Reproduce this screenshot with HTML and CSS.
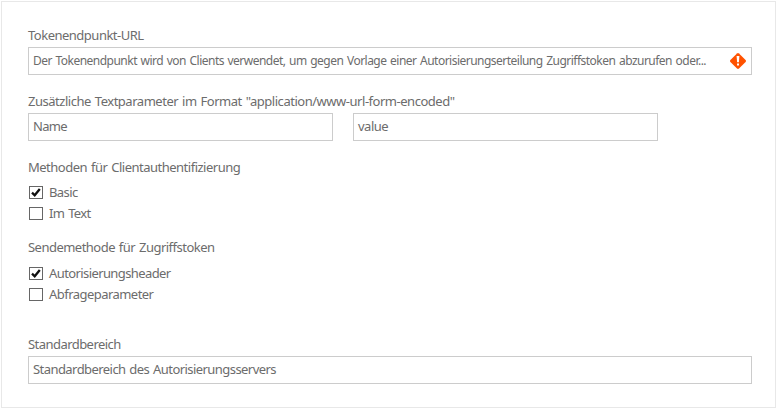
FILE: index.html
```html
<!DOCTYPE html>
<html lang="de">
<head>
<meta charset="utf-8">
<title>OAuth 2.0</title>
<link rel="stylesheet" href="styles.css">
</head>
<body>
<form class="panel">
  <div class="label"><span class="t-url">Tokenendpunkt-URL</span></div>
  <div class="field"><span class="t-hint">Der Tokenendpunkt wird von Clients verwendet, um gegen Vorlage einer Autorisierungserteilung Zugriffstoken abzurufen oder...</span>
    <svg class="alert" width="16" height="16" viewBox="0 0 16 16"><path fill="#ff5200" d="M7 .4Q8-.4 9 .4L15.6 7Q16.4 8 15.6 9L9 15.6Q8 16.4 7 15.6L.4 9Q-.4 8 .4 7Z"/><path fill="#fff" d="M6.6 3h2.8l-.5 6.3H7.1zM7 10.4h2v2H7z"/></svg>
  </div>
  <div class="label gap-params"><span class="t-params">Zusätzliche Textparameter im Format "application/www-url-form-encoded"</span></div>
  <div class="pair">
    <div class="field"><span class="t-name">Name</span></div>
    <div class="field"><span class="t-value">value</span></div>
  </div>
  <div class="label gap-methods"><span class="t-methods">Methoden für Clientauthentifizierung</span></div>
  <div class="options">
    <div class="option"><span class="box"><svg width="12" height="11" viewBox="0 0 12 11"><path d="M2 5.7L4.7 8.3L9.8 2"/></svg></span><span class="t-basic">Basic</span></div>
    <div class="option"><span class="box"></span><span class="t-text">Im Text</span></div>
  </div>
  <div class="label gap-send"><span class="t-send">Sendemethode für Zugriffstoken</span></div>
  <div class="options send">
    <div class="option"><span class="box"><svg width="12" height="11" viewBox="0 0 12 11"><path d="M2 5.7L4.7 8.3L9.8 2"/></svg></span><span class="t-header">Autorisierungsheader</span></div>
    <div class="option"><span class="box"></span><span class="t-query">Abfrageparameter</span></div>
  </div>
  <div class="label gap-scope"><span class="t-scope">Standardbereich</span></div>
  <div class="field"><span class="t-server">Standardbereich des Autorisierungsservers</span></div>
</form>
</body>
</html>
```
FILE: styles.css
```css
* { box-sizing: border-box; }
body { margin: 0; padding: 1px; background: #fff; font-family: "Noto Sans", "Open Sans", sans-serif; font-size: 13px; word-spacing: 1px; color: #6c6c6c; }
.panel { width: 775px; height: 407px; border: 1px solid #e8e8e8; padding: 24px 23px 0 26px; white-space: nowrap; }
.label { height: 21px; line-height: 18px; }
.field { display: flex; align-items: center; justify-content: space-between; height: 28px; border: 1px solid #ccc; padding: 0 5px 3px 4px; line-height: 18px; }
.alert { flex: none; position: relative; top: 1px; }
.pair { display: grid; grid-template-columns: 305px 305px; gap: 20px; }
.gap-params { margin-top: 17px; }
.gap-methods { margin-top: 17px; }
.gap-send { margin-top: 14px; }
.gap-scope { margin-top: 30px; }
.options { padding: 3px 0 0 1px; }
.send { padding-top: 4px; }
.option { display: flex; align-items: center; gap: 6px; height: 21px; }
.option > span:last-child { line-height: 18px; padding-bottom: 2px; }
.box { width: 14px; height: 13px; border: 1px solid #666; }
.box svg { display: block; fill: none; stroke: #111; stroke-width: 2.3; }

.t-url { letter-spacing: -.5px; }
.t-hint { padding-top: 2px; font-size: 12px; letter-spacing: -.52px; }
.t-params { letter-spacing: -.475px; }
.t-name { letter-spacing: -.7px; }
.t-value { letter-spacing: -.5px; }
.t-methods { letter-spacing: -.5px; }
.t-basic { letter-spacing: -.6px; }
.t-text { letter-spacing: -.6px; }
.t-send { letter-spacing: -.52px; }
.t-header { letter-spacing: -.6px; }
.t-query { letter-spacing: -.54px; }
.t-scope { letter-spacing: -.55px; }
.t-server { letter-spacing: -.56px; }
```
